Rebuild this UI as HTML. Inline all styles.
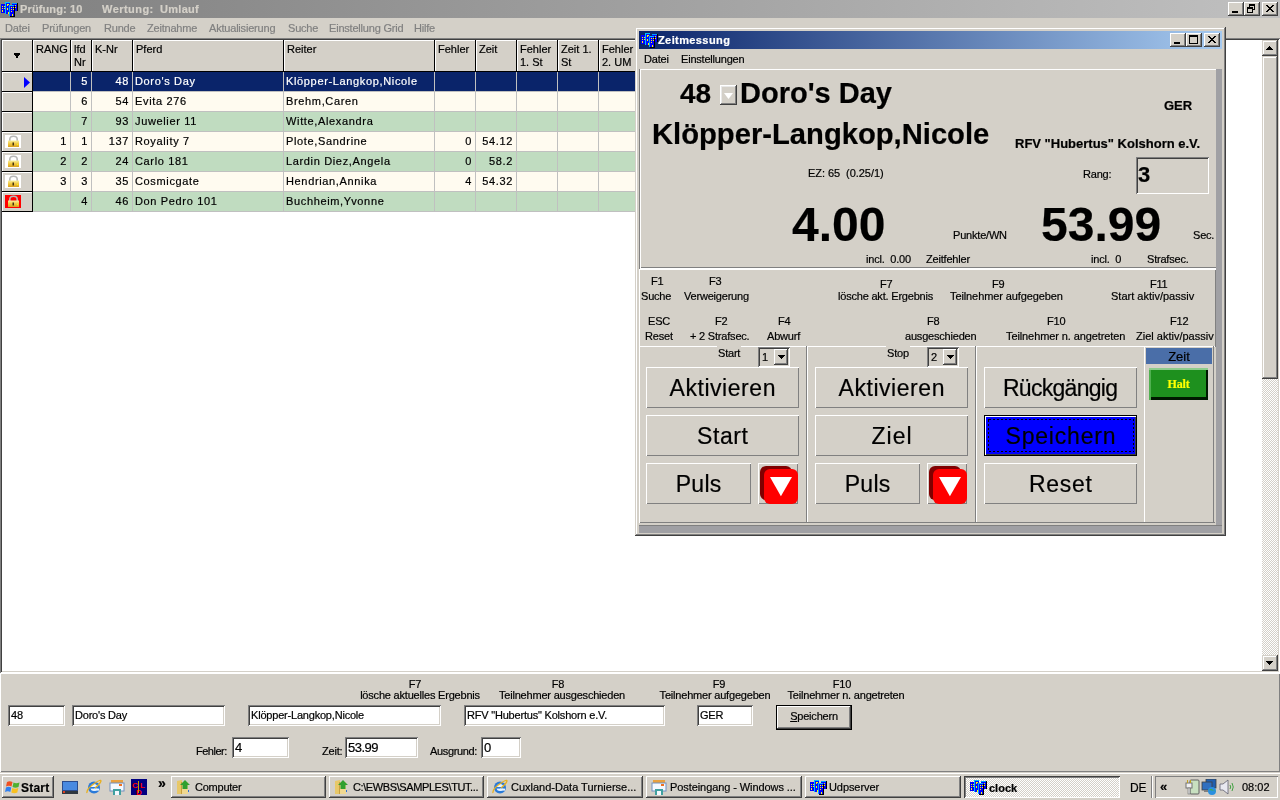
<!DOCTYPE html><html><head><meta charset="utf-8"><style>
html,body{margin:0;padding:0;width:1280px;height:800px;overflow:hidden;background:#d4d0c8;font-family:'Liberation Sans',sans-serif;}
.t{position:absolute;white-space:nowrap;line-height:1;letter-spacing:-0.2px;will-change:transform;-webkit-text-stroke:0.2px currentColor;font-family:'Liberation Sans',sans-serif;}
.g{letter-spacing:0.65px}
div{box-sizing:border-box}
</style></head><body>

<div style="position:absolute;left:0px;top:0px;width:1280px;height:18px;background:linear-gradient(90deg,#808080,#c0c0c0);"></div>
<svg style="position:absolute;left:1px;top:1px" width="17" height="16" viewBox="0 0 17 16" shape-rendering="crispEdges">
<rect x="12" y="2" width="5" height="8" fill="#000"/><rect x="11" y="2" width="5" height="8" fill="#0000ff"/><rect x="11" y="2" width="5" height="1" fill="#00a0ff"/>
<rect x="0" y="3" width="5" height="9" fill="#0000ff"/>
<rect x="4" y="1" width="5" height="12" fill="#0010ff"/><rect x="4" y="1" width="5" height="1" fill="#00c0ff"/><rect x="4" y="1" width="1" height="12" fill="#00c0ff"/>
<rect x="9" y="5" width="5" height="11" fill="#000"/><rect x="8" y="4" width="5" height="11" fill="#0000ff"/><rect x="8" y="4" width="5" height="1" fill="#00c0ff"/><rect x="8" y="4" width="1" height="11" fill="#00a0ff"/>
<rect x="1" y="5" width="1" height="1" fill="#ff0"/><rect x="3" y="5" width="1" height="1" fill="#ff0"/><rect x="1" y="7" width="1" height="1" fill="#ff0"/><rect x="3" y="7" width="1" height="1" fill="#ff0"/><rect x="1" y="9" width="1" height="2" fill="#ff0"/>
<rect x="6" y="3" width="1" height="2" fill="#ff0"/><rect x="7" y="3" width="1" height="1" fill="#ff0"/><rect x="6" y="7" width="1" height="2" fill="#ff0"/><rect x="7" y="11" width="1" height="2" fill="#ff0"/>
<rect x="10" y="6" width="1" height="1" fill="#ff0"/><rect x="12" y="6" width="1" height="1" fill="#ff0"/><rect x="10" y="8" width="1" height="1" fill="#ff0"/><rect x="12" y="8" width="1" height="1" fill="#ff0"/><rect x="10" y="10" width="1" height="1" fill="#ff0"/><rect x="11" y="13" width="1" height="2" fill="#ff0"/>
<rect x="14" y="4" width="1" height="1" fill="#ff0"/><rect x="14" y="6" width="1" height="1" fill="#ff0"/>
</svg>
<div class="t" style="left:20px;top:4px;font-size:11px;font-weight:bold;color:#d4d0c8;letter-spacing:0.13px;">Prüfung: 10</div>
<div class="t" style="left:102px;top:4px;font-size:11px;font-weight:bold;color:#d4d0c8;letter-spacing:0.45px;">Wertung:</div>
<div class="t" style="left:160px;top:4px;font-size:11px;font-weight:bold;color:#d4d0c8;letter-spacing:0.3px;">Umlauf</div>
<div style="position:absolute;left:1228px;top:2px;width:16px;height:14px;background:#d4d0c8;box-shadow:inset -1px -1px #404040,inset 1px 1px #fff,inset -2px -2px #808080,inset 2px 2px #d4d0c8;">
<div style="position:absolute;left:4px;top:9px;width:6px;height:2px;background:#000"></div>
</div>
<div style="position:absolute;left:1244px;top:2px;width:16px;height:14px;background:#d4d0c8;box-shadow:inset -1px -1px #404040,inset 1px 1px #fff,inset -2px -2px #808080,inset 2px 2px #d4d0c8;">
<div style="position:absolute;left:5px;top:2px;width:6px;height:6px;border:1px solid #000;border-top-width:2px"></div>
<div style="position:absolute;left:3px;top:5px;width:6px;height:6px;border:1px solid #000;border-top-width:2px;background:#d4d0c8"></div>
</div>
<div style="position:absolute;left:1262px;top:2px;width:16px;height:14px;background:#d4d0c8;box-shadow:inset -1px -1px #404040,inset 1px 1px #fff,inset -2px -2px #808080,inset 2px 2px #d4d0c8;">
<svg style="position:absolute;left:4px;top:3px" width="8" height="7" shape-rendering="crispEdges"><path d="M0 0h2v1h1v1h2v-1h1v-1h2v1h-1v1h-1v1h-1v1h1v1h1v1h1v1h-2v-1h-1v-1h-2v1h-1v1h-2v-1h1v-1h1v-1h1v-1h-1v-1h-1v-1h-1z"/></svg>
</div>
<div class="t" style="left:5px;top:23px;font-size:11px;font-weight:normal;color:#808080;letter-spacing:-0.2px;">Datei</div>
<div class="t" style="left:42px;top:23px;font-size:11px;font-weight:normal;color:#808080;letter-spacing:-0.2px;">Prüfungen</div>
<div class="t" style="left:104px;top:23px;font-size:11px;font-weight:normal;color:#808080;letter-spacing:-0.2px;">Runde</div>
<div class="t" style="left:147px;top:23px;font-size:11px;font-weight:normal;color:#808080;letter-spacing:-0.2px;">Zeitnahme</div>
<div class="t" style="left:209px;top:23px;font-size:11px;font-weight:normal;color:#808080;letter-spacing:-0.2px;">Aktualisierung</div>
<div class="t" style="left:288px;top:23px;font-size:11px;font-weight:normal;color:#808080;letter-spacing:-0.2px;">Suche</div>
<div class="t" style="left:329px;top:23px;font-size:11px;font-weight:normal;color:#808080;letter-spacing:-0.2px;">Einstellung Grid</div>
<div class="t" style="left:414px;top:23px;font-size:11px;font-weight:normal;color:#808080;letter-spacing:-0.2px;">Hilfe</div>
<div style="position:absolute;left:0px;top:38px;width:1280px;height:635px;background:#fff;box-shadow:inset 1px 1px #808080,inset -1px -1px #fff,inset 2px 2px #404040,inset -2px -2px #d4d0c8;"></div>
<div style="position:absolute;left:1262px;top:40px;width:16px;height:631px;background-color:#e8e6e2;background-image:repeating-conic-gradient(#d4d0c8 0 25%,#fff 0 50%);background-size:2px 2px;"></div>
<div style="position:absolute;left:1262px;top:40px;width:16px;height:16px;background:#d4d0c8;box-shadow:inset -1px -1px #404040,inset 1px 1px #d4d0c8,inset -2px -2px #808080,inset 2px 2px #fff;">
<svg style="position:absolute;left:4px;top:6px" width="7" height="4" shape-rendering="crispEdges"><rect x="3" y="0" width="1" height="1"/><rect x="2" y="1" width="3" height="1"/><rect x="1" y="2" width="5" height="1"/><rect x="0" y="3" width="7" height="1"/></svg>
</div>
<div style="position:absolute;left:1262px;top:56px;width:16px;height:323px;background:#d4d0c8;box-shadow:inset -1px -1px #404040,inset 1px 1px #d4d0c8,inset -2px -2px #808080,inset 2px 2px #fff;"></div>
<div style="position:absolute;left:1262px;top:655px;width:16px;height:16px;background:#d4d0c8;box-shadow:inset -1px -1px #404040,inset 1px 1px #d4d0c8,inset -2px -2px #808080,inset 2px 2px #fff;">
<svg style="position:absolute;left:4px;top:6px" width="7" height="4" shape-rendering="crispEdges"><rect x="0" y="0" width="7" height="1"/><rect x="1" y="1" width="5" height="1"/><rect x="2" y="2" width="3" height="1"/><rect x="3" y="3" width="1" height="1"/></svg>
</div>
<div style="position:absolute;left:2px;top:40px;width:31px;height:32px;background:#d4d0c8;border-right:1px solid #000;border-bottom:1px solid #000;box-shadow:inset 1px 1px #fff;"></div>
<div style="position:absolute;left:33px;top:40px;width:38px;height:32px;background:#d4d0c8;border-right:1px solid #000;border-bottom:1px solid #000;box-shadow:inset 1px 1px #fff;"></div>
<div style="position:absolute;left:71px;top:40px;width:21px;height:32px;background:#d4d0c8;border-right:1px solid #000;border-bottom:1px solid #000;box-shadow:inset 1px 1px #fff;"></div>
<div style="position:absolute;left:92px;top:40px;width:41px;height:32px;background:#d4d0c8;border-right:1px solid #000;border-bottom:1px solid #000;box-shadow:inset 1px 1px #fff;"></div>
<div style="position:absolute;left:133px;top:40px;width:151px;height:32px;background:#d4d0c8;border-right:1px solid #000;border-bottom:1px solid #000;box-shadow:inset 1px 1px #fff;"></div>
<div style="position:absolute;left:284px;top:40px;width:151px;height:32px;background:#d4d0c8;border-right:1px solid #000;border-bottom:1px solid #000;box-shadow:inset 1px 1px #fff;"></div>
<div style="position:absolute;left:435px;top:40px;width:41px;height:32px;background:#d4d0c8;border-right:1px solid #000;border-bottom:1px solid #000;box-shadow:inset 1px 1px #fff;"></div>
<div style="position:absolute;left:476px;top:40px;width:41px;height:32px;background:#d4d0c8;border-right:1px solid #000;border-bottom:1px solid #000;box-shadow:inset 1px 1px #fff;"></div>
<div style="position:absolute;left:517px;top:40px;width:41px;height:32px;background:#d4d0c8;border-right:1px solid #000;border-bottom:1px solid #000;box-shadow:inset 1px 1px #fff;"></div>
<div style="position:absolute;left:558px;top:40px;width:41px;height:32px;background:#d4d0c8;border-right:1px solid #000;border-bottom:1px solid #000;box-shadow:inset 1px 1px #fff;"></div>
<div style="position:absolute;left:599px;top:40px;width:41px;height:32px;background:#d4d0c8;border-right:1px solid #000;border-bottom:1px solid #000;box-shadow:inset 1px 1px #fff;"></div>
<div class="t" style="left:36px;top:43px;font-size:11px;line-height:13px;letter-spacing:0">RANG</div>
<div class="t" style="left:74px;top:43px;font-size:11px;line-height:13px;letter-spacing:0">lfd<br>Nr</div>
<div class="t" style="left:95px;top:43px;font-size:11px;line-height:13px;letter-spacing:0">K-Nr</div>
<div class="t" style="left:136px;top:43px;font-size:11px;line-height:13px;letter-spacing:0">Pferd</div>
<div class="t" style="left:287px;top:43px;font-size:11px;line-height:13px;letter-spacing:0">Reiter</div>
<div class="t" style="left:438px;top:43px;font-size:11px;line-height:13px;letter-spacing:0">Fehler</div>
<div class="t" style="left:479px;top:43px;font-size:11px;line-height:13px;letter-spacing:0">Zeit</div>
<div class="t" style="left:520px;top:43px;font-size:11px;line-height:13px;letter-spacing:0">Fehler<br>1. St</div>
<div class="t" style="left:561px;top:43px;font-size:11px;line-height:13px;letter-spacing:0">Zeit 1.<br>St</div>
<div class="t" style="left:602px;top:43px;font-size:11px;line-height:13px;letter-spacing:0">Fehler<br>2. UM</div>
<svg style="position:absolute;left:14px;top:53px" width="6" height="5" shape-rendering="crispEdges"><rect x="0" y="0" width="6" height="1"/><rect x="0" y="1" width="6" height="1"/><rect x="1" y="2" width="4" height="1"/><rect x="2" y="3" width="2" height="1"/><rect x="2" y="4" width="2" height="1"/></svg>
<div style="position:absolute;left:2px;top:72px;width:31px;height:20px;background:#d4d0c8;border-right:1px solid #000;border-bottom:1px solid #000;box-shadow:inset 1px 1px #fff;"></div>
<div style="position:absolute;left:33px;top:72px;width:606px;height:20px;background:#0a246a;"></div>
<div style="position:absolute;left:70px;top:72px;width:1px;height:20px;background:#c0c0c0;"></div>
<div style="position:absolute;left:91px;top:72px;width:1px;height:20px;background:#c0c0c0;"></div>
<div style="position:absolute;left:132px;top:72px;width:1px;height:20px;background:#c0c0c0;"></div>
<div style="position:absolute;left:283px;top:72px;width:1px;height:20px;background:#c0c0c0;"></div>
<div style="position:absolute;left:434px;top:72px;width:1px;height:20px;background:#c0c0c0;"></div>
<div style="position:absolute;left:475px;top:72px;width:1px;height:20px;background:#c0c0c0;"></div>
<div style="position:absolute;left:516px;top:72px;width:1px;height:20px;background:#c0c0c0;"></div>
<div style="position:absolute;left:557px;top:72px;width:1px;height:20px;background:#c0c0c0;"></div>
<div style="position:absolute;left:598px;top:72px;width:1px;height:20px;background:#c0c0c0;"></div>
<div style="position:absolute;left:33px;top:91px;width:606px;height:1px;background:#c0c0c0;"></div>
<div class="t g" style="left:61px;width:27px;text-align:right;top:76px;font-size:11px;color:#fff">5</div>
<div class="t g" style="left:82px;width:47px;text-align:right;top:76px;font-size:11px;color:#fff">48</div>
<div class="t g" style="left:135px;top:76px;font-size:11px;color:#fff">Doro's Day</div>
<div class="t g" style="left:286px;top:76px;font-size:11px;color:#fff">Klöpper-Langkop,Nicole</div>
<svg style="position:absolute;left:24px;top:77px" width="6" height="11"><path d="M0 0L6 5.5L0 11z" fill="#0000ff"/></svg>
<div style="position:absolute;left:2px;top:92px;width:31px;height:20px;background:#d4d0c8;border-right:1px solid #000;border-bottom:1px solid #000;box-shadow:inset 1px 1px #fff;"></div>
<div style="position:absolute;left:33px;top:92px;width:606px;height:20px;background:#fffbf0;"></div>
<div style="position:absolute;left:70px;top:92px;width:1px;height:20px;background:#c0c0c0;"></div>
<div style="position:absolute;left:91px;top:92px;width:1px;height:20px;background:#c0c0c0;"></div>
<div style="position:absolute;left:132px;top:92px;width:1px;height:20px;background:#c0c0c0;"></div>
<div style="position:absolute;left:283px;top:92px;width:1px;height:20px;background:#c0c0c0;"></div>
<div style="position:absolute;left:434px;top:92px;width:1px;height:20px;background:#c0c0c0;"></div>
<div style="position:absolute;left:475px;top:92px;width:1px;height:20px;background:#c0c0c0;"></div>
<div style="position:absolute;left:516px;top:92px;width:1px;height:20px;background:#c0c0c0;"></div>
<div style="position:absolute;left:557px;top:92px;width:1px;height:20px;background:#c0c0c0;"></div>
<div style="position:absolute;left:598px;top:92px;width:1px;height:20px;background:#c0c0c0;"></div>
<div style="position:absolute;left:33px;top:111px;width:606px;height:1px;background:#c0c0c0;"></div>
<div class="t g" style="left:61px;width:27px;text-align:right;top:96px;font-size:11px;color:#000">6</div>
<div class="t g" style="left:82px;width:47px;text-align:right;top:96px;font-size:11px;color:#000">54</div>
<div class="t g" style="left:135px;top:96px;font-size:11px;color:#000">Evita 276</div>
<div class="t g" style="left:286px;top:96px;font-size:11px;color:#000">Brehm,Caren</div>
<div style="position:absolute;left:2px;top:112px;width:31px;height:20px;background:#d4d0c8;border-right:1px solid #000;border-bottom:1px solid #000;box-shadow:inset 1px 1px #fff;"></div>
<div style="position:absolute;left:33px;top:112px;width:606px;height:20px;background:#c0dcc0;"></div>
<div style="position:absolute;left:70px;top:112px;width:1px;height:20px;background:#c0c0c0;"></div>
<div style="position:absolute;left:91px;top:112px;width:1px;height:20px;background:#c0c0c0;"></div>
<div style="position:absolute;left:132px;top:112px;width:1px;height:20px;background:#c0c0c0;"></div>
<div style="position:absolute;left:283px;top:112px;width:1px;height:20px;background:#c0c0c0;"></div>
<div style="position:absolute;left:434px;top:112px;width:1px;height:20px;background:#c0c0c0;"></div>
<div style="position:absolute;left:475px;top:112px;width:1px;height:20px;background:#c0c0c0;"></div>
<div style="position:absolute;left:516px;top:112px;width:1px;height:20px;background:#c0c0c0;"></div>
<div style="position:absolute;left:557px;top:112px;width:1px;height:20px;background:#c0c0c0;"></div>
<div style="position:absolute;left:598px;top:112px;width:1px;height:20px;background:#c0c0c0;"></div>
<div style="position:absolute;left:33px;top:131px;width:606px;height:1px;background:#c0c0c0;"></div>
<div class="t g" style="left:61px;width:27px;text-align:right;top:116px;font-size:11px;color:#000">7</div>
<div class="t g" style="left:82px;width:47px;text-align:right;top:116px;font-size:11px;color:#000">93</div>
<div class="t g" style="left:135px;top:116px;font-size:11px;color:#000">Juwelier 11</div>
<div class="t g" style="left:286px;top:116px;font-size:11px;color:#000">Witte,Alexandra</div>
<div style="position:absolute;left:2px;top:132px;width:31px;height:20px;background:#d4d0c8;border-right:1px solid #000;border-bottom:1px solid #000;box-shadow:inset 1px 1px #fff;"></div>
<div style="position:absolute;left:33px;top:132px;width:606px;height:20px;background:#fffbf0;"></div>
<div style="position:absolute;left:70px;top:132px;width:1px;height:20px;background:#c0c0c0;"></div>
<div style="position:absolute;left:91px;top:132px;width:1px;height:20px;background:#c0c0c0;"></div>
<div style="position:absolute;left:132px;top:132px;width:1px;height:20px;background:#c0c0c0;"></div>
<div style="position:absolute;left:283px;top:132px;width:1px;height:20px;background:#c0c0c0;"></div>
<div style="position:absolute;left:434px;top:132px;width:1px;height:20px;background:#c0c0c0;"></div>
<div style="position:absolute;left:475px;top:132px;width:1px;height:20px;background:#c0c0c0;"></div>
<div style="position:absolute;left:516px;top:132px;width:1px;height:20px;background:#c0c0c0;"></div>
<div style="position:absolute;left:557px;top:132px;width:1px;height:20px;background:#c0c0c0;"></div>
<div style="position:absolute;left:598px;top:132px;width:1px;height:20px;background:#c0c0c0;"></div>
<div style="position:absolute;left:33px;top:151px;width:606px;height:1px;background:#c0c0c0;"></div>
<div class="t g" style="left:23px;width:44px;text-align:right;top:136px;font-size:11px;color:#000">1</div>
<div class="t g" style="left:61px;width:27px;text-align:right;top:136px;font-size:11px;color:#000">1</div>
<div class="t g" style="left:82px;width:47px;text-align:right;top:136px;font-size:11px;color:#000">137</div>
<div class="t g" style="left:135px;top:136px;font-size:11px;color:#000">Royality 7</div>
<div class="t g" style="left:286px;top:136px;font-size:11px;color:#000">Plote,Sandrine</div>
<div class="t g" style="left:425px;width:47px;text-align:right;top:136px;font-size:11px;color:#000">0</div>
<div class="t g" style="left:466px;width:47px;text-align:right;top:136px;font-size:11px;color:#000">54.12</div>
<svg style="position:absolute;left:5px;top:135px" width="16" height="13" viewBox="0 0 16 13">
<defs><linearGradient id="lg3" x1="0" y1="0" x2="0" y2="1"><stop offset="0" stop-color="#f8f0a0"/><stop offset="0.5" stop-color="#f0c840"/><stop offset="1" stop-color="#d8a020"/></linearGradient></defs>
<rect x="0" y="0" width="16" height="13" fill="#fff"/>
<path d="M4.8 6.5V4.5Q4.8 1.3 8.5 1.3T12.2 4.5V6.5" stroke="#b8b8b8" stroke-width="1.6" fill="none"/>
<rect x="3" y="5.5" width="11" height="6.5" fill="url(#lg3)"/>
<rect x="7.5" y="7.5" width="1.5" height="3" fill="#403010"/><rect x="12" y="9" width="1" height="1" fill="#ff0"/></svg>
<div style="position:absolute;left:2px;top:152px;width:31px;height:20px;background:#d4d0c8;border-right:1px solid #000;border-bottom:1px solid #000;box-shadow:inset 1px 1px #fff;"></div>
<div style="position:absolute;left:33px;top:152px;width:606px;height:20px;background:#c0dcc0;"></div>
<div style="position:absolute;left:70px;top:152px;width:1px;height:20px;background:#c0c0c0;"></div>
<div style="position:absolute;left:91px;top:152px;width:1px;height:20px;background:#c0c0c0;"></div>
<div style="position:absolute;left:132px;top:152px;width:1px;height:20px;background:#c0c0c0;"></div>
<div style="position:absolute;left:283px;top:152px;width:1px;height:20px;background:#c0c0c0;"></div>
<div style="position:absolute;left:434px;top:152px;width:1px;height:20px;background:#c0c0c0;"></div>
<div style="position:absolute;left:475px;top:152px;width:1px;height:20px;background:#c0c0c0;"></div>
<div style="position:absolute;left:516px;top:152px;width:1px;height:20px;background:#c0c0c0;"></div>
<div style="position:absolute;left:557px;top:152px;width:1px;height:20px;background:#c0c0c0;"></div>
<div style="position:absolute;left:598px;top:152px;width:1px;height:20px;background:#c0c0c0;"></div>
<div style="position:absolute;left:33px;top:171px;width:606px;height:1px;background:#c0c0c0;"></div>
<div class="t g" style="left:23px;width:44px;text-align:right;top:156px;font-size:11px;color:#000">2</div>
<div class="t g" style="left:61px;width:27px;text-align:right;top:156px;font-size:11px;color:#000">2</div>
<div class="t g" style="left:82px;width:47px;text-align:right;top:156px;font-size:11px;color:#000">24</div>
<div class="t g" style="left:135px;top:156px;font-size:11px;color:#000">Carlo 181</div>
<div class="t g" style="left:286px;top:156px;font-size:11px;color:#000">Lardin Diez,Angela</div>
<div class="t g" style="left:425px;width:47px;text-align:right;top:156px;font-size:11px;color:#000">0</div>
<div class="t g" style="left:466px;width:47px;text-align:right;top:156px;font-size:11px;color:#000">58.2</div>
<svg style="position:absolute;left:5px;top:155px" width="16" height="13" viewBox="0 0 16 13">
<defs><linearGradient id="lg4" x1="0" y1="0" x2="0" y2="1"><stop offset="0" stop-color="#f8f0a0"/><stop offset="0.5" stop-color="#f0c840"/><stop offset="1" stop-color="#d8a020"/></linearGradient></defs>
<rect x="0" y="0" width="16" height="13" fill="#fff"/>
<path d="M4.8 6.5V4.5Q4.8 1.3 8.5 1.3T12.2 4.5V6.5" stroke="#b8b8b8" stroke-width="1.6" fill="none"/>
<rect x="3" y="5.5" width="11" height="6.5" fill="url(#lg4)"/>
<rect x="7.5" y="7.5" width="1.5" height="3" fill="#403010"/><rect x="12" y="9" width="1" height="1" fill="#ff0"/></svg>
<div style="position:absolute;left:2px;top:172px;width:31px;height:20px;background:#d4d0c8;border-right:1px solid #000;border-bottom:1px solid #000;box-shadow:inset 1px 1px #fff;"></div>
<div style="position:absolute;left:33px;top:172px;width:606px;height:20px;background:#fffbf0;"></div>
<div style="position:absolute;left:70px;top:172px;width:1px;height:20px;background:#c0c0c0;"></div>
<div style="position:absolute;left:91px;top:172px;width:1px;height:20px;background:#c0c0c0;"></div>
<div style="position:absolute;left:132px;top:172px;width:1px;height:20px;background:#c0c0c0;"></div>
<div style="position:absolute;left:283px;top:172px;width:1px;height:20px;background:#c0c0c0;"></div>
<div style="position:absolute;left:434px;top:172px;width:1px;height:20px;background:#c0c0c0;"></div>
<div style="position:absolute;left:475px;top:172px;width:1px;height:20px;background:#c0c0c0;"></div>
<div style="position:absolute;left:516px;top:172px;width:1px;height:20px;background:#c0c0c0;"></div>
<div style="position:absolute;left:557px;top:172px;width:1px;height:20px;background:#c0c0c0;"></div>
<div style="position:absolute;left:598px;top:172px;width:1px;height:20px;background:#c0c0c0;"></div>
<div style="position:absolute;left:33px;top:191px;width:606px;height:1px;background:#c0c0c0;"></div>
<div class="t g" style="left:23px;width:44px;text-align:right;top:176px;font-size:11px;color:#000">3</div>
<div class="t g" style="left:61px;width:27px;text-align:right;top:176px;font-size:11px;color:#000">3</div>
<div class="t g" style="left:82px;width:47px;text-align:right;top:176px;font-size:11px;color:#000">35</div>
<div class="t g" style="left:135px;top:176px;font-size:11px;color:#000">Cosmicgate</div>
<div class="t g" style="left:286px;top:176px;font-size:11px;color:#000">Hendrian,Annika</div>
<div class="t g" style="left:425px;width:47px;text-align:right;top:176px;font-size:11px;color:#000">4</div>
<div class="t g" style="left:466px;width:47px;text-align:right;top:176px;font-size:11px;color:#000">54.32</div>
<svg style="position:absolute;left:5px;top:175px" width="16" height="13" viewBox="0 0 16 13">
<defs><linearGradient id="lg5" x1="0" y1="0" x2="0" y2="1"><stop offset="0" stop-color="#f8f0a0"/><stop offset="0.5" stop-color="#f0c840"/><stop offset="1" stop-color="#d8a020"/></linearGradient></defs>
<rect x="0" y="0" width="16" height="13" fill="#fff"/>
<path d="M4.8 6.5V4.5Q4.8 1.3 8.5 1.3T12.2 4.5V6.5" stroke="#b8b8b8" stroke-width="1.6" fill="none"/>
<rect x="3" y="5.5" width="11" height="6.5" fill="url(#lg5)"/>
<rect x="7.5" y="7.5" width="1.5" height="3" fill="#403010"/><rect x="12" y="9" width="1" height="1" fill="#ff0"/></svg>
<div style="position:absolute;left:2px;top:192px;width:31px;height:20px;background:#d4d0c8;border-right:1px solid #000;border-bottom:1px solid #000;box-shadow:inset 1px 1px #fff;"></div>
<div style="position:absolute;left:33px;top:192px;width:606px;height:20px;background:#c0dcc0;"></div>
<div style="position:absolute;left:70px;top:192px;width:1px;height:20px;background:#c0c0c0;"></div>
<div style="position:absolute;left:91px;top:192px;width:1px;height:20px;background:#c0c0c0;"></div>
<div style="position:absolute;left:132px;top:192px;width:1px;height:20px;background:#c0c0c0;"></div>
<div style="position:absolute;left:283px;top:192px;width:1px;height:20px;background:#c0c0c0;"></div>
<div style="position:absolute;left:434px;top:192px;width:1px;height:20px;background:#c0c0c0;"></div>
<div style="position:absolute;left:475px;top:192px;width:1px;height:20px;background:#c0c0c0;"></div>
<div style="position:absolute;left:516px;top:192px;width:1px;height:20px;background:#c0c0c0;"></div>
<div style="position:absolute;left:557px;top:192px;width:1px;height:20px;background:#c0c0c0;"></div>
<div style="position:absolute;left:598px;top:192px;width:1px;height:20px;background:#c0c0c0;"></div>
<div style="position:absolute;left:33px;top:211px;width:606px;height:1px;background:#c0c0c0;"></div>
<div class="t g" style="left:61px;width:27px;text-align:right;top:196px;font-size:11px;color:#000">4</div>
<div class="t g" style="left:82px;width:47px;text-align:right;top:196px;font-size:11px;color:#000">46</div>
<div class="t g" style="left:135px;top:196px;font-size:11px;color:#000">Don Pedro 101</div>
<div class="t g" style="left:286px;top:196px;font-size:11px;color:#000">Buchheim,Yvonne</div>
<svg style="position:absolute;left:5px;top:195px" width="16" height="13" viewBox="0 0 16 13">
<defs><linearGradient id="lg6" x1="0" y1="0" x2="0" y2="1"><stop offset="0" stop-color="#f8f0a0"/><stop offset="0.5" stop-color="#f0c840"/><stop offset="1" stop-color="#d8a020"/></linearGradient></defs>
<rect x="0" y="0" width="16" height="13" fill="#ff0000"/>
<path d="M4.8 6.5V4.5Q4.8 1.3 8.5 1.3T12.2 4.5V6.5" stroke="#b8b8b8" stroke-width="1.6" fill="none"/>
<rect x="3" y="5.5" width="11" height="6.5" fill="url(#lg6)"/>
<rect x="7.5" y="7.5" width="1.5" height="3" fill="#403010"/><rect x="12" y="9" width="1" height="1" fill="#ff0"/></svg>
<div style="position:absolute;left:0px;top:673px;width:1280px;height:99px;background:#d4d0c8;box-shadow:inset 1px 1px #fff,inset -1px -1px #808080;"></div>
<div style="position:absolute;left:8px;top:705px;width:57px;height:21px;background:#fff;box-shadow:inset 1px 1px #808080,inset -1px -1px #fff,inset 2px 2px #404040,inset -2px -2px #d4d0c8;"></div>
<div class="t" style="left:11px;top:710px;font-size:11px;letter-spacing:-0.2px">48</div>
<div style="position:absolute;left:72px;top:705px;width:153px;height:21px;background:#fff;box-shadow:inset 1px 1px #808080,inset -1px -1px #fff,inset 2px 2px #404040,inset -2px -2px #d4d0c8;"></div>
<div class="t" style="left:75px;top:710px;font-size:11px;letter-spacing:-0.2px">Doro's Day</div>
<div style="position:absolute;left:248px;top:705px;width:193px;height:21px;background:#fff;box-shadow:inset 1px 1px #808080,inset -1px -1px #fff,inset 2px 2px #404040,inset -2px -2px #d4d0c8;"></div>
<div class="t" style="left:251px;top:710px;font-size:11px;letter-spacing:-0.2px">Klöpper-Langkop,Nicole</div>
<div style="position:absolute;left:464px;top:705px;width:201px;height:21px;background:#fff;box-shadow:inset 1px 1px #808080,inset -1px -1px #fff,inset 2px 2px #404040,inset -2px -2px #d4d0c8;"></div>
<div class="t" style="left:467px;top:710px;font-size:11px;letter-spacing:-0.2px">RFV "Hubertus" Kolshorn e.V.</div>
<div style="position:absolute;left:697px;top:705px;width:56px;height:21px;background:#fff;box-shadow:inset 1px 1px #808080,inset -1px -1px #fff,inset 2px 2px #404040,inset -2px -2px #d4d0c8;"></div>
<div class="t" style="left:700px;top:710px;font-size:11px;letter-spacing:-0.2px">GER</div>
<div style="position:absolute;left:232px;top:737px;width:57px;height:21px;background:#fff;box-shadow:inset 1px 1px #808080,inset -1px -1px #fff,inset 2px 2px #404040,inset -2px -2px #d4d0c8;"></div>
<div class="t" style="left:235px;top:741px;font-size:13px;letter-spacing:-0.5px">4</div>
<div style="position:absolute;left:345px;top:737px;width:73px;height:21px;background:#fff;box-shadow:inset 1px 1px #808080,inset -1px -1px #fff,inset 2px 2px #404040,inset -2px -2px #d4d0c8;"></div>
<div class="t" style="left:348px;top:741px;font-size:13px;letter-spacing:-0.5px">53.99</div>
<div style="position:absolute;left:481px;top:737px;width:40px;height:21px;background:#fff;box-shadow:inset 1px 1px #808080,inset -1px -1px #fff,inset 2px 2px #404040,inset -2px -2px #d4d0c8;"></div>
<div class="t" style="left:484px;top:741px;font-size:13px;letter-spacing:-0.5px">0</div>
<div class="t" style="left:196px;top:746px;font-size:11px;font-weight:normal;color:#000;letter-spacing:-0.5px;">Fehler:</div>
<div class="t" style="left:322px;top:746px;font-size:11px;font-weight:normal;color:#000;letter-spacing:-0.2px;">Zeit:</div>
<div class="t" style="left:430px;top:746px;font-size:11px;font-weight:normal;color:#000;letter-spacing:-0.35px;">Ausgrund:</div>
<div class="t" style="left:265px;width:300px;text-align:center;top:679px;font-size:11px;font-weight:normal;color:#000">F7</div>
<div class="t" style="left:270px;width:300px;text-align:center;top:690px;font-size:11px;font-weight:normal;color:#000">lösche aktuelles Ergebnis</div>
<div class="t" style="left:408px;width:300px;text-align:center;top:679px;font-size:11px;font-weight:normal;color:#000">F8</div>
<div class="t" style="left:412px;width:300px;text-align:center;top:690px;font-size:11px;font-weight:normal;color:#000">Teilnehmer ausgeschieden</div>
<div class="t" style="left:569px;width:300px;text-align:center;top:679px;font-size:11px;font-weight:normal;color:#000">F9</div>
<div class="t" style="left:565px;width:300px;text-align:center;top:690px;font-size:11px;font-weight:normal;color:#000">Teilnehmer aufgegeben</div>
<div class="t" style="left:692px;width:300px;text-align:center;top:679px;font-size:11px;font-weight:normal;color:#000">F10</div>
<div class="t" style="left:696px;width:300px;text-align:center;top:690px;font-size:11px;font-weight:normal;color:#000">Teilnehmer n. angetreten</div>
<div style="position:absolute;left:776px;top:705px;width:76px;height:25px;border:1px solid #000;background:#d4d0c8;box-shadow:inset -1px -1px #404040,inset 1px 1px #fff,inset -2px -2px #808080;"></div>
<div class="t" style="left:664px;width:300px;text-align:center;top:711px;font-size:11px;font-weight:normal;color:#000"><u>S</u>peichern</div>
<div style="position:absolute;left:635px;top:27px;width:591px;height:509px;background:#d4d0c8;box-shadow:inset -1px -1px #404040,inset 1px 1px #d4d0c8,inset -2px -2px #808080,inset 2px 2px #fff;"></div>
<div style="position:absolute;left:639px;top:31px;width:583px;height:18px;background:linear-gradient(90deg,#0a246a,#a6caf0);"></div>
<svg style="position:absolute;left:641px;top:32px" width="17" height="16" viewBox="0 0 17 16" shape-rendering="crispEdges">
<rect x="12" y="2" width="5" height="8" fill="#000"/><rect x="11" y="2" width="5" height="8" fill="#0000ff"/><rect x="11" y="2" width="5" height="1" fill="#00a0ff"/>
<rect x="0" y="3" width="5" height="9" fill="#0000ff"/>
<rect x="4" y="1" width="5" height="12" fill="#0010ff"/><rect x="4" y="1" width="5" height="1" fill="#00c0ff"/><rect x="4" y="1" width="1" height="12" fill="#00c0ff"/>
<rect x="9" y="5" width="5" height="11" fill="#000"/><rect x="8" y="4" width="5" height="11" fill="#0000ff"/><rect x="8" y="4" width="5" height="1" fill="#00c0ff"/><rect x="8" y="4" width="1" height="11" fill="#00a0ff"/>
<rect x="1" y="5" width="1" height="1" fill="#ff0"/><rect x="3" y="5" width="1" height="1" fill="#ff0"/><rect x="1" y="7" width="1" height="1" fill="#ff0"/><rect x="3" y="7" width="1" height="1" fill="#ff0"/><rect x="1" y="9" width="1" height="2" fill="#ff0"/>
<rect x="6" y="3" width="1" height="2" fill="#ff0"/><rect x="7" y="3" width="1" height="1" fill="#ff0"/><rect x="6" y="7" width="1" height="2" fill="#ff0"/><rect x="7" y="11" width="1" height="2" fill="#ff0"/>
<rect x="10" y="6" width="1" height="1" fill="#ff0"/><rect x="12" y="6" width="1" height="1" fill="#ff0"/><rect x="10" y="8" width="1" height="1" fill="#ff0"/><rect x="12" y="8" width="1" height="1" fill="#ff0"/><rect x="10" y="10" width="1" height="1" fill="#ff0"/><rect x="11" y="13" width="1" height="2" fill="#ff0"/>
<rect x="14" y="4" width="1" height="1" fill="#ff0"/><rect x="14" y="6" width="1" height="1" fill="#ff0"/>
</svg>
<div class="t" style="left:658px;top:35px;font-size:11px;font-weight:bold;color:#fff;letter-spacing:0.4px;">Zeitmessung</div>
<div style="position:absolute;left:1170px;top:33px;width:16px;height:14px;background:#d4d0c8;box-shadow:inset -1px -1px #404040,inset 1px 1px #fff,inset -2px -2px #808080,inset 2px 2px #d4d0c8;">
<div style="position:absolute;left:4px;top:9px;width:6px;height:2px;background:#000"></div>
</div>
<div style="position:absolute;left:1186px;top:33px;width:16px;height:14px;background:#d4d0c8;box-shadow:inset -1px -1px #404040,inset 1px 1px #fff,inset -2px -2px #808080,inset 2px 2px #d4d0c8;">
<div style="position:absolute;left:3px;top:2px;width:9px;height:9px;border:1px solid #000;border-top-width:2px"></div>
</div>
<div style="position:absolute;left:1204px;top:33px;width:16px;height:14px;background:#d4d0c8;box-shadow:inset -1px -1px #404040,inset 1px 1px #fff,inset -2px -2px #808080,inset 2px 2px #d4d0c8;">
<svg style="position:absolute;left:4px;top:3px" width="8" height="7" shape-rendering="crispEdges"><path d="M0 0h2v1h1v1h2v-1h1v-1h2v1h-1v1h-1v1h-1v1h1v1h1v1h1v1h-2v-1h-1v-1h-2v1h-1v1h-2v-1h1v-1h1v-1h1v-1h-1v-1h-1v-1h-1z"/></svg>
</div>
<div class="t" style="left:644px;top:54px;font-size:11px;font-weight:normal;color:#000;letter-spacing:-0.2px;">Datei</div>
<div class="t" style="left:681px;top:54px;font-size:11px;font-weight:normal;color:#000;letter-spacing:-0.2px;">Einstellungen</div>
<div style="position:absolute;left:639px;top:69px;width:583px;height:464px;background:#a0a0a4;"></div>
<div style="position:absolute;left:639px;top:69px;width:577px;height:456px;background:#d4d0c8;"></div>
<div style="position:absolute;left:639px;top:525px;width:583px;height:1px;background:#808080;"></div>
<div style="position:absolute;left:639px;top:69px;width:577px;height:200px;box-shadow:inset 1px 0 #808080,inset 0 1px #fff,inset 2px 0 #fff,inset 0 -1px #fff,inset 0 -2px #808080;"></div>
<div style="position:absolute;left:639px;top:269px;width:577px;height:78px;box-shadow:inset 1px 1px #fff,inset -1px -1px #808080;"></div>
<div class="t" style="left:680px;top:80px;font-size:28px;font-weight:bold;color:#000;letter-spacing:0px;">48</div>
<div style="position:absolute;left:720px;top:85px;width:17px;height:20px;background:#d4d0c8;box-shadow:inset -1px -1px #404040,inset 1px 1px #fff,inset -2px -2px #808080,inset 2px 2px #e8e8e8;"></div>
<svg style="position:absolute;left:724px;top:93px" width="9" height="6"><path d="M0 0H9L4.5 6z" fill="#fff"/></svg>
<div class="t" style="left:740px;top:79px;font-size:29px;font-weight:bold;color:#000;letter-spacing:0px;">Doro's Day</div>
<div class="t" style="left:652px;top:120px;font-size:29.2px;font-weight:bold;color:#000;letter-spacing:0px;">Klöpper-Langkop,Nicole</div>
<div class="t" style="left:1164px;top:99px;font-size:13px;font-weight:bold;color:#000;letter-spacing:0px;">GER</div>
<div class="t" style="left:1015px;top:137px;font-size:13px;font-weight:bold;color:#000;letter-spacing:0px;">RFV "Hubertus" Kolshorn e.V.</div>
<div class="t" style="left:808px;top:168px;font-size:11px;font-weight:normal;color:#000;letter-spacing:-0.05px;">EZ: 65&nbsp; (0.25/1)</div>
<div class="t" style="left:1083px;top:169px;font-size:11px;font-weight:normal;color:#000;letter-spacing:-0.2px;">Rang:</div>
<div style="position:absolute;left:1136px;top:157px;width:73px;height:37px;box-shadow:inset 1px 1px #808080,inset -1px -1px #fff,inset 2px 2px #404040;"></div>
<div class="t" style="left:1138px;top:164px;font-size:22px;font-weight:bold;color:#000;letter-spacing:0px;">3</div>
<div class="t" style="left:792px;top:201px;font-size:48px;font-weight:bold;color:#000;letter-spacing:0px;">4.00</div>
<div class="t" style="left:953px;top:230px;font-size:11px;font-weight:normal;color:#000;letter-spacing:-0.2px;">Punkte/WN</div>
<div class="t" style="left:1041px;top:201px;font-size:48px;font-weight:bold;color:#000;letter-spacing:0px;">53.99</div>
<div class="t" style="left:1193px;top:230px;font-size:11px;font-weight:normal;color:#000;letter-spacing:-0.2px;">Sec.</div>
<div class="t" style="left:866px;top:254px;font-size:11px;font-weight:normal;color:#000;letter-spacing:-0.2px;">incl.&nbsp; 0.00</div>
<div class="t" style="left:926px;top:254px;font-size:11px;font-weight:normal;color:#000;letter-spacing:-0.2px;">Zeitfehler</div>
<div class="t" style="left:1091px;top:254px;font-size:11px;font-weight:normal;color:#000;letter-spacing:-0.2px;">incl.&nbsp; 0</div>
<div class="t" style="left:1147px;top:254px;font-size:11px;font-weight:normal;color:#000;letter-spacing:-0.2px;">Strafsec.</div>
<div style="position:absolute;left:640px;top:270px;width:575px;height:76px;overflow:hidden">
<div class="t" style="left:11px;top:6px;font-size:11px">F1</div>
<div class="t" style="left:1px;top:21px;font-size:11px;letter-spacing:-0.2px">Suche</div>
<div class="t" style="left:69px;top:6px;font-size:11px">F3</div>
<div class="t" style="left:44px;top:21px;font-size:11px;letter-spacing:-0.2px">Verweigerung</div>
<div class="t" style="left:240px;top:9px;font-size:11px">F7</div>
<div class="t" style="left:198px;top:21px;font-size:11px;letter-spacing:-0.2px">lösche akt. Ergebnis</div>
<div class="t" style="left:352px;top:9px;font-size:11px">F9</div>
<div class="t" style="left:310px;top:21px;font-size:11px;letter-spacing:-0.1px">Teilnehmer aufgegeben</div>
<div class="t" style="left:510px;top:9px;font-size:11px">F11</div>
<div class="t" style="left:471px;top:21px;font-size:11px;letter-spacing:0px">Start aktiv/passiv</div>
<div class="t" style="left:8px;top:46px;font-size:11px">ESC</div>
<div class="t" style="left:5px;top:61px;font-size:11px;letter-spacing:-0.2px">Reset</div>
<div class="t" style="left:75px;top:46px;font-size:11px">F2</div>
<div class="t" style="left:50px;top:61px;font-size:11px;letter-spacing:-0.2px">+ 2 Strafsec.</div>
<div class="t" style="left:138px;top:46px;font-size:11px">F4</div>
<div class="t" style="left:127px;top:61px;font-size:11px;letter-spacing:-0.2px">Abwurf</div>
<div class="t" style="left:287px;top:46px;font-size:11px">F8</div>
<div class="t" style="left:265px;top:61px;font-size:11px;letter-spacing:-0.2px">ausgeschieden</div>
<div class="t" style="left:407px;top:46px;font-size:11px">F10</div>
<div class="t" style="left:366px;top:61px;font-size:11px;letter-spacing:-0.1px">Teilnehmer n. angetreten</div>
<div class="t" style="left:530px;top:46px;font-size:11px">F12</div>
<div class="t" style="left:496px;top:61px;font-size:11px;letter-spacing:0px">Ziel aktiv/passiv</div>
</div>
<div style="position:absolute;left:639px;top:346px;width:576px;height:1px;background:#fff;"></div>
<div style="position:absolute;left:806px;top:346px;width:1px;height:176px;background:#808080;"></div>
<div style="position:absolute;left:807px;top:346px;width:1px;height:176px;background:#fff;"></div>
<div style="position:absolute;left:975px;top:346px;width:1px;height:176px;background:#808080;"></div>
<div style="position:absolute;left:976px;top:346px;width:1px;height:176px;background:#fff;"></div>
<div style="position:absolute;left:1144px;top:346px;width:1px;height:176px;background:#fff;"></div>
<div style="position:absolute;left:1213px;top:346px;width:1px;height:176px;background:#808080;"></div>
<div style="position:absolute;left:639px;top:522px;width:576px;height:1px;background:#808080;"></div>
<div style="position:absolute;left:639px;top:347px;width:1px;height:176px;background:#fff;"></div>
<div style="position:absolute;left:717px;top:346px;width:24px;height:13px;background:#d4d0c8;"></div>
<div class="t" style="left:718px;top:348px;font-size:11px;font-weight:normal;color:#000;letter-spacing:-0.2px;">Start</div>
<div style="position:absolute;left:758px;top:347px;width:32px;height:20px;background:#d4d0c8;box-shadow:inset 1px 1px #808080,inset -1px -1px #fff,inset 2px 2px #404040,inset -2px -2px #d4d0c8;"></div>
<div class="t" style="left:762px;top:352px;font-size:11px">1</div>
<div style="position:absolute;left:774px;top:349px;width:14px;height:16px;background:#d4d0c8;box-shadow:inset -1px -1px #404040,inset 1px 1px #fff,inset -2px -2px #808080,inset 2px 2px #d4d0c8;"></div>
<svg style="position:absolute;left:778px;top:355px" width="7" height="4" shape-rendering="crispEdges"><rect x="0" y="0" width="7" height="1"/><rect x="1" y="1" width="5" height="1"/><rect x="2" y="2" width="3" height="1"/><rect x="3" y="3" width="1" height="1"/></svg>
<div style="position:absolute;left:886px;top:346px;width:24px;height:13px;background:#d4d0c8;"></div>
<div class="t" style="left:887px;top:348px;font-size:11px;font-weight:normal;color:#000;letter-spacing:-0.2px;">Stop</div>
<div style="position:absolute;left:927px;top:347px;width:32px;height:20px;background:#d4d0c8;box-shadow:inset 1px 1px #808080,inset -1px -1px #fff,inset 2px 2px #404040,inset -2px -2px #d4d0c8;"></div>
<div class="t" style="left:931px;top:352px;font-size:11px">2</div>
<div style="position:absolute;left:943px;top:349px;width:14px;height:16px;background:#d4d0c8;box-shadow:inset -1px -1px #404040,inset 1px 1px #fff,inset -2px -2px #808080,inset 2px 2px #d4d0c8;"></div>
<svg style="position:absolute;left:947px;top:355px" width="7" height="4" shape-rendering="crispEdges"><rect x="0" y="0" width="7" height="1"/><rect x="1" y="1" width="5" height="1"/><rect x="2" y="2" width="3" height="1"/><rect x="3" y="3" width="1" height="1"/></svg>
<div style="position:absolute;left:646px;top:367px;width:153px;height:41px;background:#d4d0c8;box-shadow:inset 1px 1px #fff,inset -1px -1px #808080;"></div>
<div class="t" style="left:646px;width:153px;text-align:center;top:377px;font-size:23px;letter-spacing:0.55px;text-indent:0.55px">Aktivieren</div>
<div style="position:absolute;left:646px;top:415px;width:153px;height:41px;background:#d4d0c8;box-shadow:inset 1px 1px #fff,inset -1px -1px #808080;"></div>
<div class="t" style="left:646px;width:153px;text-align:center;top:425px;font-size:23px;letter-spacing:0.55px;text-indent:0.55px">Start</div>
<div style="position:absolute;left:646px;top:463px;width:105px;height:41px;background:#d4d0c8;box-shadow:inset 1px 1px #fff,inset -1px -1px #808080;"></div>
<div class="t" style="left:646px;width:105px;text-align:center;top:473px;font-size:23px;letter-spacing:0.3px;text-indent:0.3px">Puls</div>
<div style="position:absolute;left:815px;top:367px;width:153px;height:41px;background:#d4d0c8;box-shadow:inset 1px 1px #fff,inset -1px -1px #808080;"></div>
<div class="t" style="left:815px;width:153px;text-align:center;top:377px;font-size:23px;letter-spacing:0.55px;text-indent:0.55px">Aktivieren</div>
<div style="position:absolute;left:815px;top:415px;width:153px;height:41px;background:#d4d0c8;box-shadow:inset 1px 1px #fff,inset -1px -1px #808080;"></div>
<div class="t" style="left:815px;width:153px;text-align:center;top:425px;font-size:23px;letter-spacing:1.0px;text-indent:1.0px">Ziel</div>
<div style="position:absolute;left:815px;top:463px;width:105px;height:41px;background:#d4d0c8;box-shadow:inset 1px 1px #fff,inset -1px -1px #808080;"></div>
<div class="t" style="left:815px;width:105px;text-align:center;top:473px;font-size:23px;letter-spacing:0.3px;text-indent:0.3px">Puls</div>
<div style="position:absolute;left:758px;top:463px;width:40px;height:41px;background:#d4d0c8;box-shadow:inset 1px 1px #fff,inset -1px -1px #808080;"></div><svg style="position:absolute;left:758px;top:463px" width="40" height="41" viewBox="0 0 40 41"><rect x="2" y="3" width="32" height="34" rx="6" fill="#800000"/><rect x="6" y="6" width="34" height="35" rx="6" fill="#f00"/><path d="M12 14H34L22.9 33.2z" fill="#fff"/></svg>
<div style="position:absolute;left:927px;top:463px;width:40px;height:41px;background:#d4d0c8;box-shadow:inset 1px 1px #fff,inset -1px -1px #808080;"></div><svg style="position:absolute;left:927px;top:463px" width="40" height="41" viewBox="0 0 40 41"><rect x="2" y="3" width="32" height="34" rx="6" fill="#800000"/><rect x="6" y="6" width="34" height="35" rx="6" fill="#f00"/><path d="M12 14H34L22.9 33.2z" fill="#fff"/></svg>
<div style="position:absolute;left:984px;top:367px;width:153px;height:41px;background:#d4d0c8;box-shadow:inset 1px 1px #fff,inset -1px -1px #808080;"></div>
<div class="t" style="left:984px;width:153px;text-align:center;top:377px;font-size:23px;letter-spacing:-0.7px;text-indent:-0.7px">Rückgängig</div>
<div style="position:absolute;left:984px;top:415px;width:153px;height:41px;background:#0000ff;border:1px solid #000;box-shadow:inset 1px 1px #fff,inset -1px -1px #404040"></div>
<svg style="position:absolute;left:988px;top:419px" width="146" height="33" shape-rendering="crispEdges"><rect x="0.5" y="0.5" width="145" height="32" fill="none" stroke="#000" stroke-width="1" stroke-dasharray="2 2"/></svg>
<div class="t" style="left:984px;width:153px;text-align:center;top:425px;font-size:23px;letter-spacing:0.8px;text-indent:0.8px">Speichern</div>
<div style="position:absolute;left:984px;top:463px;width:153px;height:41px;background:#d4d0c8;box-shadow:inset 1px 1px #fff,inset -1px -1px #808080;"></div>
<div class="t" style="left:984px;width:153px;text-align:center;top:473px;font-size:23px;letter-spacing:0.7px;text-indent:0.7px">Reset</div>
<div style="position:absolute;left:1146px;top:348px;width:66px;height:16px;background:#4a6ea8;"></div>
<div class="t" style="left:1146px;width:66px;text-align:center;top:350px;font-size:13px;letter-spacing:0">Zeit</div>
<div style="position:absolute;left:1149px;top:368px;width:59px;height:32px;background:#1e901e;box-shadow:inset 0 2px #8ccc8c,inset 2px 0 #50b050,inset -2px -3px #001800;"></div>
<div class="t" style="left:1149px;width:59px;text-align:center;top:378px;font-size:12px;font-weight:bold;color:#ff0;font-family:'Liberation Serif',serif">Halt</div>
<div style="position:absolute;left:0px;top:772px;width:1280px;height:28px;background:#d4d0c8;box-shadow:inset 0 1px #d4d0c8,inset 0 2px #fff;"></div>
<div style="position:absolute;left:2px;top:776px;width:52px;height:22px;background:#d4d0c8;box-shadow:inset -1px -1px #404040,inset 1px 1px #fff,inset -2px -2px #808080,inset 2px 2px #d4d0c8;"></div>
<svg style="position:absolute;left:5px;top:779px" width="16" height="16" viewBox="0 0 16 16">
<path d="M2 3Q4.5 1.5 7.5 3L6.5 7.5Q4 6 1 7.5z" fill="#f05020"/>
<path d="M8.5 3.5Q11 5 14.5 3.5L13.5 8Q10.5 9.5 7.5 8z" fill="#50b030"/>
<path d="M1 8.5Q3.5 7 6.3 8.5L5.3 13Q3 11.5 0 13z" fill="#3080f0"/>
<path d="M7.3 9Q10 10.5 13.3 9L12.3 13.5Q9.5 15 6.3 13.5z" fill="#f8c020"/></svg>
<div class="t" style="left:21px;top:782px;font-size:12px;font-weight:bold;color:#000;letter-spacing:0.2px;">Start</div>
<svg style="position:absolute;left:62px;top:781px" width="16" height="13" viewBox="0 0 16 13">
<rect x="0" y="0" width="16" height="11" fill="#2c4c8c"/><rect x="1" y="1" width="14" height="8" fill="#4a8ae0"/><rect x="0" y="10" width="16" height="3" fill="#303840"/><rect x="1" y="10" width="2" height="2" fill="#e04020"/></svg>
<svg style="position:absolute;left:86px;top:779px" width="16" height="16" viewBox="0 0 16 16">
<circle cx="8" cy="8.5" r="6" fill="#2a7ad8"/><circle cx="8" cy="8.5" r="3.5" fill="#e8f4ff"/><rect x="4" y="8" width="8" height="1.6" fill="#2a7ad8"/><rect x="8" y="9.6" width="5" height="2" fill="#e8f4ff"/>
<path d="M1 14Q0 10 9 4Q15 0 15 2Q14 5 9 9" stroke="#e8b020" stroke-width="1.3" fill="none"/></svg>
<svg style="position:absolute;left:109px;top:780px" width="16" height="15" viewBox="0 0 16 15">
<rect x="2" y="0" width="12" height="3" fill="#e8a040"/><rect x="1" y="3" width="14" height="8" fill="#f4f8ff" stroke="#7090c0" stroke-width="1"/><rect x="4" y="9" width="8" height="6" fill="#40a0a0"/><rect x="6" y="11" width="4" height="4" fill="#f4f8ff"/><rect x="10" y="4" width="3" height="2" fill="#f07020"/></svg>
<svg style="position:absolute;left:131px;top:779px" width="16" height="16" viewBox="0 0 16 16">
<rect width="16" height="16" fill="#000080"/><text x="1" y="9" font-size="8" font-family="Liberation Sans" fill="#f00" font-weight="bold">C</text><text x="9" y="9" font-size="8" font-family="Liberation Sans" fill="#f00" font-weight="bold">L</text><text x="5" y="16" font-size="8" font-family="Liberation Sans" fill="#f00" font-weight="bold">D</text><rect x="7" y="2" width="1" height="12" fill="#c0a000"/></svg>
<div class="t" style="left:158px;top:776px;font-size:14px;font-weight:bold;color:#000;letter-spacing:0px;">&raquo;</div>
<div style="position:absolute;left:171px;top:776px;width:155px;height:22px;background:#d4d0c8;box-shadow:inset -1px -1px #404040,inset 1px 1px #fff,inset -2px -2px #808080,inset 2px 2px #d4d0c8;"></div>
<svg style="position:absolute;left:176px;top:779px" width="16" height="16" viewBox="0 0 16 16">
<path d="M1 2L6 1V15L1 15z" fill="#e8c868"/><path d="M5 3H12V15H5z" fill="#f0d890"/><path d="M5 3H6V15H5z" fill="#c8a040"/>
<path d="M9 1L14 6H11.5V10H6.5V6H4z" fill="#30a030"/><rect x="12" y="11" width="1" height="2" fill="#3070d0"/></svg>
<div class="t" style="left:195px;top:782px;font-size:11px;letter-spacing:-0.24px;font-weight:normal">Computer</div>
<div style="position:absolute;left:329px;top:776px;width:155px;height:22px;background:#d4d0c8;box-shadow:inset -1px -1px #404040,inset 1px 1px #fff,inset -2px -2px #808080,inset 2px 2px #d4d0c8;"></div>
<svg style="position:absolute;left:334px;top:779px" width="16" height="16" viewBox="0 0 16 16">
<path d="M1 2L6 1V15L1 15z" fill="#e8c868"/><path d="M5 3H12V15H5z" fill="#f0d890"/><path d="M5 3H6V15H5z" fill="#c8a040"/>
<path d="M9 1L14 6H11.5V10H6.5V6H4z" fill="#30a030"/><rect x="12" y="11" width="1" height="2" fill="#3070d0"/></svg>
<div class="t" style="left:353px;top:782px;font-size:11px;letter-spacing:-0.4px;font-weight:normal">C:\EWBS\SAMPLES\TUT...</div>
<div style="position:absolute;left:487px;top:776px;width:156px;height:22px;background:#d4d0c8;box-shadow:inset -1px -1px #404040,inset 1px 1px #fff,inset -2px -2px #808080,inset 2px 2px #d4d0c8;"></div>
<svg style="position:absolute;left:492px;top:779px" width="16" height="16" viewBox="0 0 16 16">
<circle cx="8" cy="8.5" r="6" fill="#2a7ad8"/><circle cx="8" cy="8.5" r="3.5" fill="#e8f4ff"/><rect x="4" y="8" width="8" height="1.6" fill="#2a7ad8"/><rect x="8" y="9.6" width="5" height="2" fill="#e8f4ff"/>
<path d="M1 14Q0 10 9 4Q15 0 15 2Q14 5 9 9" stroke="#e8b020" stroke-width="1.3" fill="none"/></svg>
<div class="t" style="left:511px;top:782px;font-size:11px;letter-spacing:0px;font-weight:normal">Cuxland-Data Turnierse...</div>
<div style="position:absolute;left:646px;top:776px;width:156px;height:22px;background:#d4d0c8;box-shadow:inset -1px -1px #404040,inset 1px 1px #fff,inset -2px -2px #808080,inset 2px 2px #d4d0c8;"></div>
<svg style="position:absolute;left:651px;top:780px" width="16" height="15" viewBox="0 0 16 15">
<rect x="2" y="0" width="12" height="3" fill="#e8a040"/><rect x="1" y="3" width="14" height="8" fill="#f4f8ff" stroke="#7090c0" stroke-width="1"/><rect x="4" y="9" width="8" height="6" fill="#40a0a0"/><rect x="6" y="11" width="4" height="4" fill="#f4f8ff"/><rect x="10" y="4" width="3" height="2" fill="#f07020"/></svg>
<div class="t" style="left:670px;top:782px;font-size:11px;letter-spacing:-0.08px;font-weight:normal">Posteingang - Windows ...</div>
<div style="position:absolute;left:805px;top:776px;width:156px;height:22px;background:#d4d0c8;box-shadow:inset -1px -1px #404040,inset 1px 1px #fff,inset -2px -2px #808080,inset 2px 2px #d4d0c8;"></div>
<svg style="position:absolute;left:810px;top:779px" width="17" height="16" viewBox="0 0 17 16" shape-rendering="crispEdges">
<rect x="12" y="2" width="5" height="8" fill="#000"/><rect x="11" y="2" width="5" height="8" fill="#0000ff"/><rect x="11" y="2" width="5" height="1" fill="#00a0ff"/>
<rect x="0" y="3" width="5" height="9" fill="#0000ff"/>
<rect x="4" y="1" width="5" height="12" fill="#0010ff"/><rect x="4" y="1" width="5" height="1" fill="#00c0ff"/><rect x="4" y="1" width="1" height="12" fill="#00c0ff"/>
<rect x="9" y="5" width="5" height="11" fill="#000"/><rect x="8" y="4" width="5" height="11" fill="#0000ff"/><rect x="8" y="4" width="5" height="1" fill="#00c0ff"/><rect x="8" y="4" width="1" height="11" fill="#00a0ff"/>
<rect x="1" y="5" width="1" height="1" fill="#ff0"/><rect x="3" y="5" width="1" height="1" fill="#ff0"/><rect x="1" y="7" width="1" height="1" fill="#ff0"/><rect x="3" y="7" width="1" height="1" fill="#ff0"/><rect x="1" y="9" width="1" height="2" fill="#ff0"/>
<rect x="6" y="3" width="1" height="2" fill="#ff0"/><rect x="7" y="3" width="1" height="1" fill="#ff0"/><rect x="6" y="7" width="1" height="2" fill="#ff0"/><rect x="7" y="11" width="1" height="2" fill="#ff0"/>
<rect x="10" y="6" width="1" height="1" fill="#ff0"/><rect x="12" y="6" width="1" height="1" fill="#ff0"/><rect x="10" y="8" width="1" height="1" fill="#ff0"/><rect x="12" y="8" width="1" height="1" fill="#ff0"/><rect x="10" y="10" width="1" height="1" fill="#ff0"/><rect x="11" y="13" width="1" height="2" fill="#ff0"/>
<rect x="14" y="4" width="1" height="1" fill="#ff0"/><rect x="14" y="6" width="1" height="1" fill="#ff0"/>
</svg>
<div class="t" style="left:829px;top:782px;font-size:11px;letter-spacing:-0.08px;font-weight:normal">Udpserver</div>
<div style="position:absolute;left:964px;top:776px;width:156px;height:22px;background-color:#e8e6e2;background-image:repeating-conic-gradient(#d4d0c8 0 25%,#fff 0 50%);background-size:2px 2px;box-shadow:inset 1px 1px #404040,inset -1px -1px #fff,inset 2px 2px #808080;"></div>
<svg style="position:absolute;left:970px;top:779px" width="17" height="16" viewBox="0 0 17 16" shape-rendering="crispEdges">
<rect x="12" y="2" width="5" height="8" fill="#000"/><rect x="11" y="2" width="5" height="8" fill="#0000ff"/><rect x="11" y="2" width="5" height="1" fill="#00a0ff"/>
<rect x="0" y="3" width="5" height="9" fill="#0000ff"/>
<rect x="4" y="1" width="5" height="12" fill="#0010ff"/><rect x="4" y="1" width="5" height="1" fill="#00c0ff"/><rect x="4" y="1" width="1" height="12" fill="#00c0ff"/>
<rect x="9" y="5" width="5" height="11" fill="#000"/><rect x="8" y="4" width="5" height="11" fill="#0000ff"/><rect x="8" y="4" width="5" height="1" fill="#00c0ff"/><rect x="8" y="4" width="1" height="11" fill="#00a0ff"/>
<rect x="1" y="5" width="1" height="1" fill="#ff0"/><rect x="3" y="5" width="1" height="1" fill="#ff0"/><rect x="1" y="7" width="1" height="1" fill="#ff0"/><rect x="3" y="7" width="1" height="1" fill="#ff0"/><rect x="1" y="9" width="1" height="2" fill="#ff0"/>
<rect x="6" y="3" width="1" height="2" fill="#ff0"/><rect x="7" y="3" width="1" height="1" fill="#ff0"/><rect x="6" y="7" width="1" height="2" fill="#ff0"/><rect x="7" y="11" width="1" height="2" fill="#ff0"/>
<rect x="10" y="6" width="1" height="1" fill="#ff0"/><rect x="12" y="6" width="1" height="1" fill="#ff0"/><rect x="10" y="8" width="1" height="1" fill="#ff0"/><rect x="12" y="8" width="1" height="1" fill="#ff0"/><rect x="10" y="10" width="1" height="1" fill="#ff0"/><rect x="11" y="13" width="1" height="2" fill="#ff0"/>
<rect x="14" y="4" width="1" height="1" fill="#ff0"/><rect x="14" y="6" width="1" height="1" fill="#ff0"/>
</svg>
<div class="t" style="left:989px;top:783px;font-size:11px;letter-spacing:0px;font-weight:bold">clock</div>
<div class="t" style="left:1130px;top:782px;font-size:12px;font-weight:normal;color:#000;letter-spacing:-0.2px;">DE</div>
<div style="position:absolute;left:1151px;top:776px;width:1px;height:22px;background:#808080;"></div>
<div style="position:absolute;left:1152px;top:776px;width:1px;height:22px;background:#fff;"></div>
<div style="position:absolute;left:1155px;top:776px;width:123px;height:22px;box-shadow:inset 1px 1px #808080,inset -1px -1px #fff;"></div>
<div class="t" style="left:1160px;top:780px;font-size:13px;font-weight:bold;color:#000;letter-spacing:0px;">&laquo;</div>
<svg style="position:absolute;left:1184px;top:779px" width="16" height="16" viewBox="0 0 16 16">
<rect x="6" y="1" width="9" height="14" rx="1" fill="#c8e0c0" stroke="#606060"/><rect x="2" y="4" width="6" height="5" fill="#f0f0f0" stroke="#707070"/><rect x="3" y="1" width="1" height="3" fill="#c0a020"/><rect x="6" y="1" width="1" height="3" fill="#c0a020"/><rect x="4" y="9" width="2" height="6" fill="#e0e0e0" stroke="#707070" stroke-width="0.6"/></svg>
<svg style="position:absolute;left:1201px;top:779px" width="16" height="16" viewBox="0 0 16 16">
<rect x="5" y="0" width="10" height="9" fill="#2060b0" stroke="#404040" stroke-width="0.8"/><rect x="1" y="3" width="10" height="8" fill="#3070c0" stroke="#404040" stroke-width="0.8"/><rect x="3" y="11" width="6" height="2" fill="#808080"/><circle cx="11" cy="12" r="4" fill="#2a90e0"/><path d="M8 11Q10 9 12 11T15 12" fill="#40b040"/></svg>
<svg style="position:absolute;left:1219px;top:779px" width="17" height="16" viewBox="0 0 17 16">
<path d="M1 5H4L9 1V15L4 11H1z" fill="#e8e8f0" stroke="#606070" stroke-width="0.8"/><path d="M11 6Q12.5 8 11 10" stroke="#40a040" fill="none"/><path d="M13 4Q15.5 8 13 12" stroke="#40a040" fill="none"/></svg>
<div class="t" style="left:1242px;top:782px;font-size:11px;font-weight:normal;color:#000;letter-spacing:0px;">08:02</div>
</body></html>
